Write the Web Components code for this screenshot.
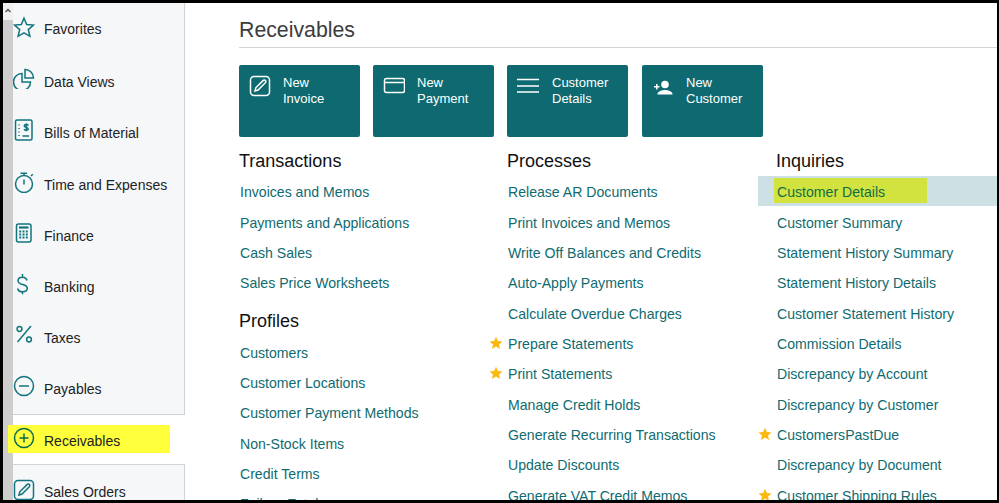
<!DOCTYPE html>
<html><head><meta charset="utf-8"><style>
html,body{margin:0;padding:0;background:#fff}
body{width:999px;height:503px;overflow:hidden;font-family:"Liberation Sans",Arial,sans-serif}
</style></head><body>
<app-shell>
<side-nav slot="nav"></side-nav>
<main-panel slot="main"></main-panel>
</app-shell>
<script>
const ICONS={
star:'<path d="M11 2.200l2.700 6.300 6.800.6-5.200 4.500 1.600 6.700L11 16.800l-5.900 3.500 1.600-6.700L1.500 9.100l6.800-.6z"/>',
pie:'<path d="M9 6.500a8.500 8.500 0 1 0 8.500 8.500H9z"/><path d="M12 2.500a8.500 8.500 0 0 1 8.500 8.500H12z"/>',
bill:'<rect x="2.500" y="1" width="16.500" height="20" rx="1.500"/><path d="M6 5.500v1M6 9v1M6 12.500v1M6 16v1M9.500 17H16"/><path d="M15.500 6.500c-.5-1-3.500-1.500-4.200 0-.7 2 4.200 1.500 4 3.600-.3 1.600-3.400 1.400-4.300.2M13.400 4.200v8"/>',
timer:'<circle cx="11" cy="13" r="8.500"/><path d="M7.500 2.200h6.500M11 2.500v2M11 8.500v5M18 5l1.800-1.800"/>',
calc:'<rect x="3.500" y="2" width="14.500" height="18" rx="2"/><path d="M6 5.500h9.500" stroke-width="2.200"/><path d="M6.200 9.500h9M6.200 12.500h9M6.200 15.500h9" stroke-width="1.800" stroke-dasharray="2 1.300"/>',
dollar:'<path d="M14 7.500c-.5-2.300-2.500-3.200-4.500-3.200-2.500 0-4.500 1.300-4.500 3.500 0 4.800 9.300 2.700 9.300 7.500 0 2.300-2.300 3.500-4.800 3.500s-4.400-1-4.900-3.300M9.500 1v3.300M9.500 18v3.300"/>',
percent:'<circle cx="6.500" cy="6" r="2.400"/><circle cx="16" cy="16.500" r="2.400"/><path d="M18 3L4.500 19"/>',
minus:'<circle cx="11" cy="11" r="9.500"/><path d="M6 11h10"/>',
plus:'<circle cx="11" cy="11" r="9.500"/><path d="M6.500 11h9M11 6.500v9"/>',
pencil:'<rect x="1.500" y="1.500" width="19" height="19" rx="3.500"/><path d="M6 16l.8-3.200L14 5.600c.8-.8 1.800-.8 2.400-.1s.6 1.600-.1 2.300L9.100 15z"/>',
card:'<rect x="1.500" y="3.500" width="20" height="14" rx="2"/><path d="M1.500 7.500h20"/>',
menu:'<path d="M0 1.500h22M0 8h22M0 14h22"/>'
};
function icon(n,c,w){return `<svg width="${w||22}" height="22" viewBox="0 0 22 22" fill="none" stroke="${c}" stroke-width="1.500" aria-hidden="true">${ICONS[n]}</svg>`}

customElements.define('app-shell',class extends HTMLElement{constructor(){super();this.attachShadow({mode:'open'}).innerHTML=`<style>
:host{display:flex;box-sizing:border-box;width:999px;height:503px;border:solid #000;border-width:3px 2px 3px 3px;overflow:hidden;background:#fff}
.n{flex:none;width:182px;display:block}
.m{flex:1;min-width:0}
</style><div class="n"><slot name="nav"></slot></div><div class="m"><slot name="main"></slot></div>`}});

customElements.define('nav-item',class extends HTMLElement{constructor(){super();const c=this.getAttribute('color')||'#12747c';const it=this.getAttribute('lift')||'-2.5';this.attachShadow({mode:'open'}).innerHTML=`<style>
:host{display:flex;align-items:center;height:51px;box-sizing:border-box;color:#222;font-size:14px}
.i{width:28px;flex:none;display:flex;margin-left:-3px;position:relative;top:${it}px}
span{margin-left:3px}
</style><div class="i">${icon(this.getAttribute('icon'),c)}</div><span><slot></slot></span>`}});

customElements.define('side-nav',class extends HTMLElement{constructor(){super();this.attachShadow({mode:'open'}).innerHTML=`<style>
:host{display:flex;height:497px;overflow:hidden}
.bar{width:10px;flex:none;background:#cdcdcd;position:relative}
.bar::before{content:"";display:block;height:17px;background:#f0f0f0}
.bar svg{position:absolute;left:2px;top:5px}
.col{width:172px;flex:none;display:flex;flex-direction:column}
.panel{flex:none;background:#f5f7f9;border:solid #cfd3d6;box-sizing:border-box;border-width:0 1px 1px 0;padding-left:3px}
.top{height:412px}
.act{flex:none;height:49px;position:relative;margin-left:-5px;display:flex;align-items:center}
.hl{position:absolute;left:0;top:10px;width:162px;height:28px;background:#ffff3c}
.act nav-item{position:relative;left:8px;height:49px;top:1px}
.bot{border-top-width:1px;border-bottom:0;height:40px}
.top nav-item:first-child{margin-top:1px;margin-bottom:2px;height:50px}
.top nav-item:nth-child(3){margin-bottom:1px}
.bot nav-item{height:50px;margin-top:2px}
</style>
<div class="bar"><svg width="6" height="5" viewBox="0 0 6 5"><path d="M.5 4L3 1.500 5.500 4" fill="none" stroke="#555" stroke-width="1.500"/></svg></div>
<div class="col">
<div class="panel top">
<nav-item icon="star">Favorites</nav-item>
<nav-item icon="pie" lift="-4">Data Views</nav-item>
<nav-item icon="bill">Bills of Material</nav-item>
<nav-item icon="timer">Time and Expenses</nav-item>
<nav-item icon="calc">Finance</nav-item>
<nav-item icon="dollar">Banking</nav-item>
<nav-item icon="percent" lift="-4">Taxes</nav-item>
<nav-item icon="minus">Payables</nav-item>
</div>
<div class="act"><div class="hl"></div><nav-item icon="plus" color="#0d6b52">Receivables</nav-item></div>
<div class="panel bot"><nav-item icon="pencil">Sales Orders</nav-item></div>
</div>`}});

customElements.define('action-tile',class extends HTMLElement{constructor(){super();const ic=this.getAttribute('icon');
const svg=ic==='person'?`<svg width="22" height="22" viewBox="0 0 22 22" fill="#fff" aria-hidden="true"><circle cx="13" cy="6.500" r="3.800"/><path d="M5.500 16c0-2.800 5-4 7.500-4s7.500 1.200 7.500 4v.5h-15zM2 8h2V6h1.500v2h2v1.500h-2v2H4v-2H2z"/></svg>`:icon(ic,'#fff');
this.attachShadow({mode:'open'}).innerHTML=`<style>
:host{display:flex;box-sizing:border-box;width:121px;height:72px;background:#0e6a70;border-radius:2px;color:#fff;font-size:13px;line-height:16px;padding:10px 0 0 10px}
.i{width:${this.getAttribute('iw')||34}px;flex:none}
.i.s{padding-top:3px}
</style><div class="i ${ic==='menu'||ic==='person'?'s':''}">${svg}</div><div class="t"><slot></slot></div>`}});

customElements.define('link-item',class extends HTMLElement{constructor(){super();const st=this.hasAttribute('star');this.attachShadow({mode:'open'}).innerHTML=`<style>
:host{display:block;position:relative;height:30.350px;line-height:30.350px;font-size:14.100px;color:#0f6b70;white-space:nowrap;padding-left:1px}
:host([active]){color:#0e6e45}
svg{position:absolute;left:-18px;top:7px}
.bg,.mark{position:absolute;display:none}
:host([active]) .bg{display:block;left:-18px;width:260px;top:-1px;height:30px;background:#cde0e3}
:host([active]) .mark{display:block;left:-2px;top:1px;width:153px;height:25px;background:#d2e23f}
span{position:relative}
</style><div class="bg"></div><div class="mark"></div>${st?'<svg width="14" height="14" viewBox="0 0 14 14" fill="#fbb80f" aria-hidden="true"><path d="M7 .7l1.900 4.300 4.600.4-3.500 3 1.100 4.600L7 10.600 2.900 13l1.100-4.600-3.500-3 4.600-.4z"/></svg>':''}<span><slot></slot></span>`}});

customElements.define('link-group',class extends HTMLElement{constructor(){super();this.attachShadow({mode:'open'}).innerHTML=`<style>
:host{display:block}
h2{margin:0;font:400 18px/23px "Liberation Sans",Arial,sans-serif;color:#111;height:27.300px}
</style><h2>${this.getAttribute('title')}</h2><slot></slot>`}});

customElements.define('main-panel',class extends HTMLElement{constructor(){super();this.attachShadow({mode:'open'}).innerHTML=`<style>
:host{display:block;height:497px;overflow:hidden;padding-left:54px;font-family:"Liberation Sans",Arial,sans-serif}
h1{margin:0;font:400 21.300px/24px "Liberation Sans",Arial,sans-serif;color:#3c3c3c;padding-top:15px;height:29px;border-bottom:1px solid #d4d4d4}
.tiles{display:flex;gap:13px;margin-top:17px}
.cols{display:grid;grid-template-columns:268px 269px 1fr;margin-top:13px}
.g2{margin-top:11.700px}
</style>
<h1>Receivables</h1>
<div class="tiles">
<action-tile icon="pencil">New<br>Invoice</action-tile>
<action-tile icon="card">New<br>Payment</action-tile>
<action-tile icon="menu" iw="35">Customer<br>Details</action-tile>
<action-tile icon="person" style="margin-left:1px">New<br>Customer</action-tile>
</div>
<div class="cols">
<div>
<link-group title="Transactions">
<link-item>Invoices and Memos</link-item><link-item>Payments and Applications</link-item><link-item>Cash Sales</link-item><link-item>Sales Price Worksheets</link-item>
</link-group>
<link-group title="Profiles" class="g2">
<link-item>Customers</link-item><link-item>Customer Locations</link-item><link-item>Customer Payment Methods</link-item><link-item>Non-Stock Items</link-item><link-item>Credit Terms</link-item><link-item>Failure Estab</link-item>
</link-group>
</div>
<div>
<link-group title="Processes">
<link-item>Release AR Documents</link-item><link-item>Print Invoices and Memos</link-item><link-item>Write Off Balances and Credits</link-item><link-item>Auto-Apply Payments</link-item><link-item>Calculate Overdue Charges</link-item><link-item star>Prepare Statements</link-item><link-item star>Print Statements</link-item><link-item>Manage Credit Holds</link-item><link-item>Generate Recurring Transactions</link-item><link-item>Update Discounts</link-item><link-item>Generate VAT Credit Memos</link-item>
</link-group>
</div>
<div>
<link-group title="Inquiries">
<link-item active>Customer Details</link-item><link-item>Customer Summary</link-item><link-item>Statement History Summary</link-item><link-item>Statement History Details</link-item><link-item>Customer Statement History</link-item><link-item>Commission Details</link-item><link-item>Discrepancy by Account</link-item><link-item>Discrepancy by Customer</link-item><link-item star>CustomersPastDue</link-item><link-item>Discrepancy by Document</link-item><link-item star>Customer Shipping Rules</link-item>
</link-group>
</div>
</div>`}});
</script>
</body></html>
